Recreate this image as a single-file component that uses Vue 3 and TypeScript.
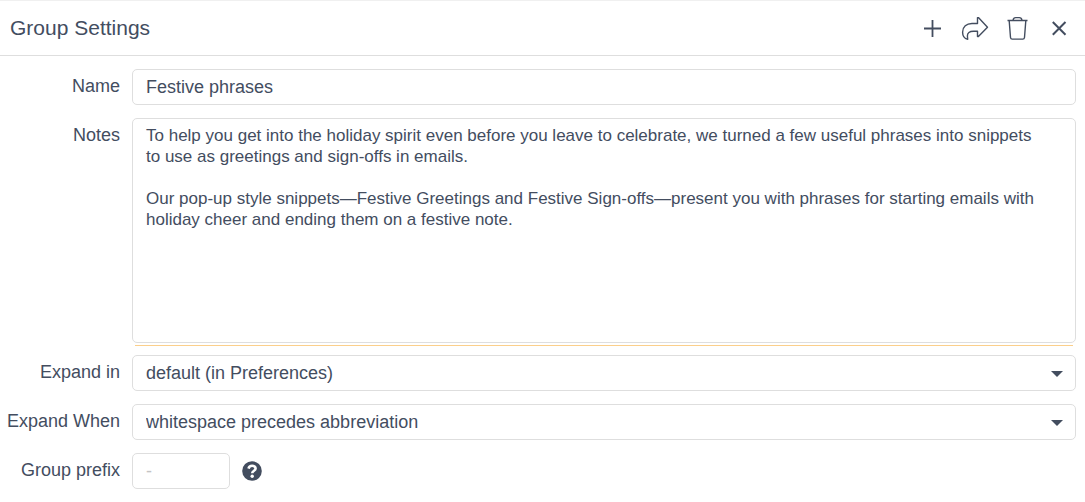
<script setup lang="ts">
import { ref } from 'vue'

const name = ref<string>('Festive phrases')
const notes = ref<string>(
  'To help you get into the holiday spirit even before you leave to celebrate, we turned a few useful phrases into snippets to use as greetings and sign-offs in emails.\n\n' +
    'Our pop-up style snippets—Festive Greetings and Festive Sign-offs—present you with phrases for starting emails with holiday cheer and ending them on a festive note.',
)
const expandIn = ref<string>('default (in Preferences)')
const expandWhen = ref<string>('whitespace precedes abbreviation')
const prefix = ref<string>('')
</script>

<template>
  <main class="panel">
    <header class="header">
      <h1 class="title">Group Settings</h1>
      <div class="actions">
        <button type="button" class="icon-button" aria-label="Add">
          <svg width="28" height="28" viewBox="0 0 28 28">
            <path d="M13.5 6V23M5 14.5H22" stroke-width="1.8" />
          </svg>
        </button>
        <button type="button" class="icon-button" aria-label="Share">
          <svg width="28" height="28" viewBox="0 0 28 28">
            <path
              d="M16.5 3.6H17.4L26.5 13.2L17.4 22.6H16.5V17.2H12.5C8.4 17.2 6.3 19 6.4 22L6.7 25.3C3.6 24.6 1.6 21.6 1.6 18.2C1.6 12.8 5.5 9.5 11 9.5H16.5Z"
              stroke-width="1.4"
              stroke-linejoin="round"
            />
          </svg>
        </button>
        <button type="button" class="icon-button" aria-label="Delete">
          <svg width="28" height="28" viewBox="0 0 28 28">
            <path
              d="M4.5 6.5H24.5M10 6.3C10.3 4.5 11.4 3.6 12.7 3.6H16.3C17.6 3.6 18.7 4.5 19 6.3M6.2 6.7L7.5 23.5Q7.7 25.1 9.2 25.1H19.8Q21.3 25.1 21.5 23.5L22.8 6.7"
              stroke-width="1.4"
            />
          </svg>
        </button>
        <button type="button" class="icon-button" aria-label="Close">
          <svg width="28" height="28" viewBox="0 0 28 28">
            <path d="M7.8 8L20.5 20.7M20.5 8L7.8 20.7" stroke-width="2" />
          </svg>
        </button>
      </div>
    </header>

    <form class="form" @submit.prevent>
      <label class="label" for="group-name">Name</label>
      <input id="group-name" v-model="name" class="control" type="text" />

      <label class="label" for="group-notes">Notes</label>
      <div class="notes-wrap">
        <textarea id="group-notes" v-model="notes" class="control notes" spellcheck="false"></textarea>
        <div class="notes-rule"></div>
      </div>

      <label class="label" for="expand-in">Expand in</label>
      <div class="select-wrap">
        <select id="expand-in" v-model="expandIn" class="control select">
          <option>default (in Preferences)</option>
        </select>
        <svg class="caret" width="12" height="6" viewBox="0 0 12 6"><path d="M0 0H12L6 6Z" /></svg>
      </div>

      <label class="label" for="expand-when">Expand When</label>
      <div class="select-wrap">
        <select id="expand-when" v-model="expandWhen" class="control select">
          <option>whitespace precedes abbreviation</option>
        </select>
        <svg class="caret" width="12" height="6" viewBox="0 0 12 6"><path d="M0 0H12L6 6Z" /></svg>
      </div>

      <label class="label" for="group-prefix">Group prefix</label>
      <div class="prefix-row">
        <input id="group-prefix" v-model="prefix" class="control prefix" type="text" placeholder="-" />
        <button type="button" class="help" aria-label="Help">
          <svg width="20" height="20" viewBox="0 0 20 20">
            <circle class="help-disc" cx="10" cy="10" r="9.8" />
            <path class="help-hook" d="M6.5 7.6C7 5.7 8.3 4.8 10.1 4.8C12.1 4.8 13.6 5.9 13.6 7.6C13.6 9.8 10.2 9.7 10.2 12.3" />
            <circle class="help-dot" cx="10.2" cy="15.2" r="1.7" />
          </svg>
        </button>
      </div>
    </form>
  </main>
</template>

<style scoped>
.panel {
  border-top: 1px solid #f0f0f0;
  background: #fff;
  color: #434d5f;
  font-family: "Liberation Sans", Arial, sans-serif;
  font-size: 18px;
  line-height: 21px;
}

.header {
  display: flex;
  align-items: center;
  justify-content: space-between;
  height: 54px;
  padding: 0 12px 0 10px;
  border-bottom: 1px solid #dedede;
}

.title {
  margin: 0;
  font-size: 21px;
  font-weight: 400;
  line-height: 24px;
}

.actions {
  display: flex;
  gap: 14px;
}

.icon-button,
.help {
  display: block;
  padding: 0;
  border: 0;
  background: none;
  color: inherit;
  cursor: pointer;
}

.icon-button svg {
  display: block;
  fill: none;
  stroke: currentColor;
}

.form {
  display: grid;
  grid-template-columns: 113px minmax(0, 1fr);
  gap: 13px 12px;
  padding: 13px 9px 13px 7px;
}

.label {
  padding-top: 7px;
  text-align: right;
  white-space: nowrap;
}

.control {
  display: block;
  box-sizing: border-box;
  width: 100%;
  height: 36px;
  margin: 0;
  padding: 0 13px;
  border: 1px solid #dedede;
  border-radius: 5px;
  outline: 0;
  background: #fff;
  color: inherit;
  font: inherit;
}

.notes {
  height: 225px;
  padding: 6px 39px 6px 13px;
  font-size: 17px;
  resize: none;
}

.notes-rule {
  height: 1px;
  margin: 2px 3px -4px;
  background: #fbcf8b;
}

.select-wrap {
  position: relative;
}

.select {
  appearance: none;
  padding-right: 40px;
}

.caret {
  position: absolute;
  top: 16px;
  right: 13px;
  fill: #434d5f;
  pointer-events: none;
}

.prefix-row {
  display: flex;
  align-items: center;
  gap: 12px;
}

.prefix {
  width: 98px;
}

.prefix::placeholder {
  color: #c4c4c4;
  opacity: 1;
}

.help svg {
  display: block;
}

.help-disc {
  fill: #434d5f;
}

.help-hook {
  fill: none;
  stroke: #fff;
  stroke-width: 2.6;
}

.help-dot {
  fill: #fff;
}
</style>
